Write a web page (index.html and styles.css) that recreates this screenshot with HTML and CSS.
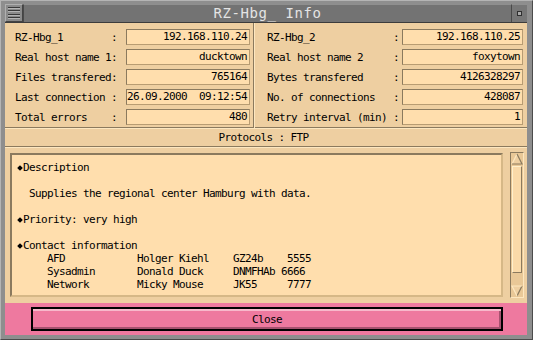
FILE: index.html
```html
<!DOCTYPE html>
<html>
<head>
<meta charset="utf-8">
<link rel="stylesheet" href="styles.css">
</head>
<body>
<div class="window">
  <div class="titlebar">
    <div class="tb-menu"><span></span><span></span><span></span><span></span></div>
    <div class="tb-title">RZ-Hbg_ Info</div>
    <div class="tb-max"><span></span></div>
  </div>
  <div class="client">
    <div class="hosts">
      <div class="host host-left">
        <div class="row"><span class="label">RZ-Hbg_1        :</span><span class="field">192.168.110.24</span></div>
        <div class="row"><span class="label">Real host name 1:</span><span class="field">ducktown</span></div>
        <div class="row"><span class="label">Files transfered:</span><span class="field">765164</span></div>
        <div class="row"><span class="label">Last connection :</span><span class="field field-left">26.09.2000  09:12:54</span></div>
        <div class="row"><span class="label">Total errors    :</span><span class="field">480</span></div>
      </div>
      <div class="vsep"></div>
      <div class="host host-right">
        <div class="row"><span class="label">RZ-Hbg_2             :</span><span class="field">192.168.110.25</span></div>
        <div class="row"><span class="label">Real host name 2     :</span><span class="field">foxytown</span></div>
        <div class="row"><span class="label">Bytes transfered     :</span><span class="field">4126328297</span></div>
        <div class="row"><span class="label">No. of connections   :</span><span class="field">428087</span></div>
        <div class="row"><span class="label">Retry interval (min) :</span><span class="field">1</span></div>
      </div>
    </div>
    <div class="protocols">Protocols : FTP</div>
    <div class="info">
      <div class="textarea"><span class="bullet"></span>Description

  Supplies the regional center Hamburg with data.

<span class="bullet"></span>Priority: very high

<span class="bullet"></span>Contact information
     AFD            Holger Kiehl    GZ24b    5555
     Sysadmin       Donald Duck     DNMFHAb 6666
     Network        Micky Mouse     JK55     7777</div>
      <div class="scrollbar">
        <div class="arrow"><svg width="12" height="12" viewBox="0 0 12 12"><polygon points="6,1 11,11 1,11" fill="#eecfa1"/><polyline points="1,11 6,1" fill="none" stroke="#fde7c0" stroke-width="1.2"/><polyline points="6,1 11,11 1,11" fill="none" stroke="#8b7a5e" stroke-width="1.2"/></svg></div>
        <div class="thumb"></div>
        <div class="spacer"></div>
        <div class="arrow"><svg width="12" height="12" viewBox="0 0 12 12"><polygon points="1,1 11,1 6,11" fill="#eecfa1"/><polyline points="6,11 11,1" fill="none" stroke="#8b7a5e" stroke-width="1.2"/><polyline points="6,11 1,1 11,1" fill="none" stroke="#fde7c0" stroke-width="1.2"/></svg></div>
      </div>
    </div>
    <div class="buttons"><button class="close">Close</button></div>
  </div>
</div>
</body>
</html>
```
FILE: styles.css
```css
* { box-sizing: border-box; }
body {
  margin: 0;
  background: #8c8c8c;
  font-family: "DejaVu Sans Mono", "Liberation Mono", monospace;
}
.window {
  width: 533px;
  height: 340px;
  background: #8e8e8e;
  border: 1px solid;
  border-color: #b4b4b4 #4c4c4c #4c4c4c #b4b4b4;
  padding: 3px 5px 4px 4px;
  display: flex;
  flex-direction: column;
}
.titlebar {
  height: 19px;
  display: flex;
  background: #737373;
  border-bottom: 1px solid #3c3c3c;
  flex: none;
}
.tb-menu {
  width: 18px;
  background: #8a8a8a;
  border: 1px solid;
  border-color: #b0b0b0 #444 #444 #b0b0b0;
  display: flex;
  flex-direction: column;
  justify-content: space-evenly;
  padding: 1px 2px;
}
.tb-menu span {
  display: block;
  height: 2px;
  border-top: 1px solid #3a3a3a;
  border-bottom: 1px solid #b4b4b4;
}
.tb-title {
  flex: 1;
  text-align: center;
  color: #e4e4e4;
  font-size: 14px;
  letter-spacing: 0.57px;
  line-height: 17px;
  border-top: 1px solid #8f8f8f;
  border-left: 1px solid #4a4a4a;
  border-right: 1px solid #4a4a4a;
}
.tb-max {
  width: 15px;
  background: #777;
  border-top: 1px solid #8f8f8f;
  display: flex;
  align-items: center;
  justify-content: center;
}
.tb-max span {
  width: 5px;
  height: 5px;
  border: 1px solid #2f2f2f;
  background: #a8a8a8;
}
.client {
  flex: 1;
  background: #eecfa1;
  display: flex;
  flex-direction: column;
}
.hosts {
  display: grid;
  grid-template-columns: 248px 2px 1fr;
  height: 105px;
  border-bottom: 1px solid #8b7a5e;
  flex: none;
}
.vsep {
  background: linear-gradient(to right, #8b7a5e 50%, #fde7c0 50%);
}
.host-left { padding: 6px 3px 0 10px; }
.host-right { padding: 6px 4px 0 12px; }
.row {
  display: flex;
  align-items: center;
  height: 16px;
  margin-bottom: 4px;
}
.label {
  white-space: pre;
  font-size: 11px;
  letter-spacing: -0.62px;
  color: #000;
}
.host-left .label { width: 111px; }
.host-right .label { width: 135px; }
.field {
  height: 16px;
  background: #ffdead;
  border: 1px solid;
  border-color: #8b7a5e #b89c72 #b89c72 #8b7a5e;
  text-align: right;
  padding: 0 2px;
  line-height: 14px;
  font-size: 11px;
  letter-spacing: -0.62px;
  white-space: pre;
  overflow: hidden;
  color: #000;
}
.host-left .field { width: 124px; }
.host-right .field { width: 121px; }
.field.field-left { text-align: left; padding: 0; }
.protocols {
  height: 19px;
  border-top: 1px solid #fde7c0;
  border-bottom: 1px solid #8b7a5e;
  text-align: center;
  line-height: 17px;
  font-size: 11px;
  letter-spacing: -0.62px;
  padding-right: 5px;
  flex: none;
}
.info {
  height: 156px;
  border-top: 1px solid #fde7c0;
  display: flex;
  align-items: flex-start;
  padding: 4px 3px 0 5px;
  flex: none;
}
.textarea {
  width: 493px;
  height: 144px;
  margin-top: 1px;
  background: #ffdead;
  border: 2px solid;
  border-color: #8b7a5e #d6b887 #d6b887 #8b7a5e;
  padding: 6px 5px 4px;
  font-size: 11px;
  letter-spacing: -0.62px;
  line-height: 13px;
  white-space: pre;
  overflow: hidden;
  color: #000;
}
.bullet {
  display: inline-block;
  width: 6px;
  height: 13px;
  vertical-align: top;
  position: relative;
}
.bullet::before {
  content: "";
  position: absolute;
  left: 1px;
  top: 5px;
  width: 4px;
  height: 4px;
  background: #000;
  transform: rotate(45deg);
}
.scrollbar {
  width: 14px;
  height: 146px;
  margin-left: 7px;
  border: 1px solid;
  border-color: #8b7a5e #fde7c0 #fde7c0 #8b7a5e;
  background: #e9c897;
  display: flex;
  flex-direction: column;
}
.arrow {
  height: 12px;
  display: flex;
  justify-content: center;
}
.arrow svg { display: block; }
.thumb {
  margin: 1px 0 0 1px;
  width: 10px;
  height: 107px;
  background: #fadaa9;
  border: 1px solid;
  border-color: #fff0cc #8b7a5e #8b7a5e #fff0cc;
}
.spacer { flex: 1; }
.buttons {
  flex: 1;
  background: #ee799f;
  padding: 4px 24px 0 26px;
}
.close {
  display: block;
  width: 100%;
  height: 24px;
  border: 2px solid #000;
  background: #ee799f;
  box-shadow: inset 0 2px 0 #f7b8cb, inset -2px -2px 0 #a5526f;
  font-family: "DejaVu Sans Mono", "Liberation Mono", monospace;
  font-size: 11px;
  letter-spacing: -0.62px;
  color: #000;
  padding: 0;
}
```
